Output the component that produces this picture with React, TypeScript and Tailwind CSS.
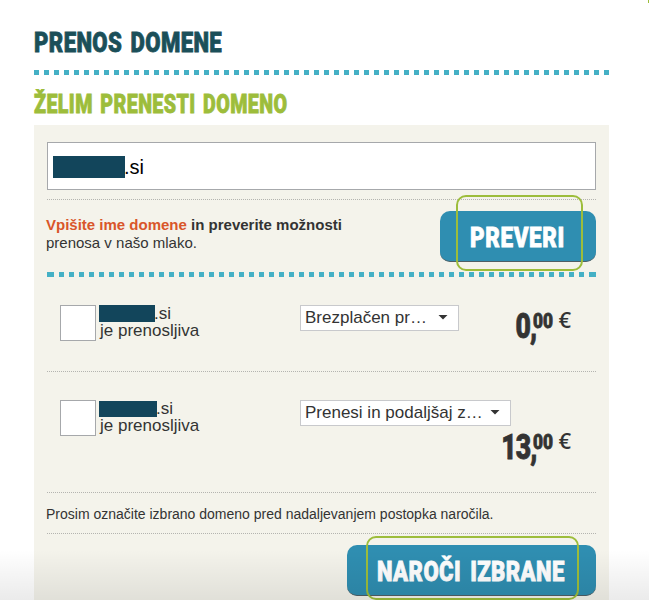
import React from 'react';

const display =
  "font-['Roboto','Liberation_Sans',sans-serif] font-black whitespace-nowrap leading-none [-webkit-text-stroke:0.8px_currentColor] [paint-order:stroke_fill] [stroke-linejoin:round]";

function Rule() {
  return <div className="border-t border-dotted border-[#b4b4b0]" />;
}

function Dots({ className = '' }: { className?: string }) {
  return (
    <div
      className={`h-[5px] border-[#44b0c5] bg-[repeating-linear-gradient(90deg,#44b0c5_0_5px,transparent_5px_10px)] bg-clip-padding ${className}`}
    />
  );
}

function Action({ label, width, ring, text }: { label: string; width: string; ring: string; text: string }) {
  return (
    <button
      className={`relative h-[51px] rounded-[10px] border-b border-[#4f5f65] bg-[#2f8eb1] text-white ${width}`}
    >
      <span className={`absolute rounded-[10px] border-2 border-[#9dbd3b] ${ring}`} />
      <span className={`absolute origin-left ${display} ${text}`}>{label}</span>
    </button>
  );
}

function Price({ whole }: { whole: string }) {
  return (
    <div className="flex h-[40px] items-start text-[#333]">
      <span className={`-mr-[3px] origin-right scale-x-[0.76] text-[35px] tracking-[-1.2px] ${display}`}>{whole},</span>
      <span className="w-[22px]">
        <span className={`inline-block origin-left scale-x-[0.82] pt-[2px] text-[21px] ${display}`}>00</span>
      </span>
      <span className="ml-[3px] pr-px font-['Open_Sans','Liberation_Sans',sans-serif] text-[22px] leading-[20px] font-semibold">
        €
      </span>
    </div>
  );
}

function Domain({ bar }: { bar: string }) {
  return (
    <div className="flex w-[240px]">
      <span className="h-[36px] w-[36px] shrink-0 border border-[#a6a8ab] bg-white" />
      <div className="ml-[3px] text-[17px] leading-[17px]">
        <div className="flex h-[17px] items-center">
          <span className={`bg-[#12455b] ${bar}`} />
          <span className="-ml-px w-[20px]">.si</span>
        </div>
        <div className="pl-px">je prenosljiva</div>
      </div>
    </div>
  );
}

function Select({ label, width }: { label: string; width: string }) {
  return (
    <div
      className={`flex h-[26px] shrink-0 items-center justify-between border border-[#c8c9cc] bg-white pr-[10px] pl-[4px] text-[17px] leading-[22px] whitespace-nowrap ${width}`}
    >
      <span>{label}</span>
      <svg className="-mt-px" width="10" height="5" viewBox="0 0 10 5">
        <path d="M0.5 0h9L5 4.5z" fill="#333" />
      </svg>
    </div>
  );
}

export default function App() {
  return (
    <div className="relative h-[600px] w-[649px] overflow-hidden bg-white px-[34px] pr-[40px] font-['Liberation_Sans',Arial,sans-serif] text-[#333]">
      <div className="flex h-[70px] items-start pt-[29px]">
        <h1 className={`origin-left scale-x-[0.79] text-[28px] tracking-[0.5px] [word-spacing:3px] text-[#1b4f59] ${display}`}>
          PRENOS DOMENE
        </h1>
      </div>
      <Dots />
      <div className="flex h-[50px] items-start pt-[16px]">
        <h2 className={`origin-left scale-x-[0.757] text-[26px] tracking-[0.5px] [word-spacing:3px] text-[#9dbd3b] ${display}`}>
          ŽELIM PRENESTI DOMENO
        </h2>
      </div>
      <main className="h-[475px] bg-[#f4f3eb] px-[13px] pt-[17px]">
        <div className="flex h-[48px] items-center border border-[#a6a8ab] bg-white pl-[5px] text-[20px] text-black">
          <span className="mt-[2px] h-[22px] w-[72px] bg-[#12455b]" />
          <span className="-ml-px mt-[2px]">.si</span>
        </div>
        <div className="h-[9px]" />
        <Rule />
        <div className="flex h-[72px] items-start justify-between pt-[11px]">
          <p className="-ml-px pt-[5px] text-[15px] leading-[18px] whitespace-nowrap">
            <b>
              <span className="text-[#d9562a]">Vpišite ime domene</span> in preverite možnosti
            </b>
            <br />
            prenosa v našo mlako.
          </p>
          <Action
            label="PREVERI"
            width="w-[156px]"
            ring="left-[16px] top-[-16px] h-[76px] w-[127px]"
            text="left-[30px] top-[13px] text-[28px] scale-x-[0.8] tracking-[0.8px]"
          />
        </div>
        <Dots className="border-x-2" />
        <section className="flex h-[94px] items-start pt-[28px] pl-[13px]">
          <Domain bar="h-[17px] w-[56px]" />
          <Select label="Brezplačen pr…" width="w-[159px]" />
          <div className="ml-auto pt-[4px] pr-[24px]">
            <Price whole="0" />
          </div>
        </section>
        <Rule />
        <section className="h-[120px] pt-[28px] pl-[13px]">
          <div className="flex h-[30px] items-start">
            <Domain bar="h-[16px] w-[58px]" />
            <Select label="Prenesi in podaljšaj z…" width="w-[211px]" />
          </div>
          <div className="flex justify-end pr-[24px]">
            <Price whole="13" />
          </div>
        </section>
        <Rule />
        <p className="-ml-px h-[40px] text-[14px] leading-[42px] whitespace-nowrap">
          Prosim označite izbrano domeno pred nadaljevanjem postopka naročila.
        </p>
        <Rule />
        <div className="flex justify-end pt-[11px]">
          <Action
            label="NAROČI IZBRANE"
            width="w-[249px]"
            ring="left-[19px] top-[-9px] h-[64px] w-[213px]"
            text="left-[30px] top-[13px] text-[28px] scale-x-[0.79] tracking-[0.5px] [word-spacing:4px]"
          />
        </div>
      </main>
      <div className="pointer-events-none absolute inset-x-0 bottom-0 h-[50px] bg-linear-to-b from-transparent to-black/8" />
      <div className="absolute top-0 right-0 h-[3px] w-px bg-[#9dbd3b]" />
    </div>
  );
}
